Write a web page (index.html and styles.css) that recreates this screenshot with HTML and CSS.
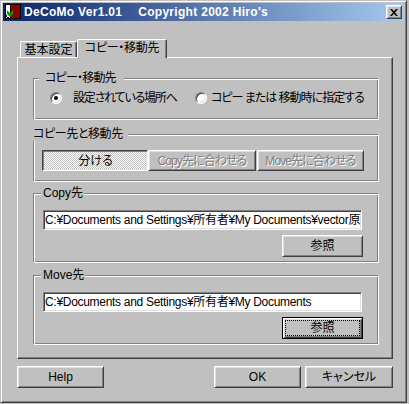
FILE: index.html
```html
<!DOCTYPE html>
<html lang="ja">
<head>
<meta charset="utf-8">
<title>DeCoMo</title>
<link rel="stylesheet" href="styles.css">
</head>
<body>
<div class="window">
  <div class="titlebar">
    <svg class="app-icon" width="16" height="16" viewBox="0 0 16 16">
      <rect x="0.5" y="0.5" width="6" height="14" fill="#fff" stroke="#000"/>
      <rect x="5" y="0" width="11" height="15" fill="#000"/>
      <rect x="6" y="1" width="9" height="13" fill="#8c0000"/>
      <polygon points="2,6 5,9 8,6 8,10 5,13 2,10" fill="#00a000"/>
      <rect x="0" y="11" width="2" height="2" fill="#000"/>
      <rect x="2" y="13" width="2" height="2" fill="#000"/>
      <rect x="0" y="14" width="1" height="2" fill="#000"/>
    </svg>
    <span class="title">DeCoMo Ver1.01　 Copyright 2002 Hiro's</span>
    <span class="close">
      <svg width="8" height="7" viewBox="0 0 8 7">
        <path d="M0 0h2l2 2.2L6 0h2L5 3.5 8 7H6L4 4.8 2 7H0l3-3.5z" fill="#000"/>
      </svg>
    </span>
  </div>

  <div class="tabs">
    <div class="tab">基本設定</div>
    <div class="tab active">コピー・移動先</div>
  </div>

  <div class="panel">
    <div class="group g1">
      <div class="legend l1">コピー・移動先</div>
      <div class="radios">
        <div class="opt opt1"><span class="radio checked"></span><span class="opt-text">設定されている場所へ</span></div>
        <div class="opt"><span class="radio"></span><span class="opt-text near">コピー または 移動時に指定する</span></div>
      </div>
    </div>

    <div class="group g2">
      <div class="legend l2">コピー先と移動先</div>
      <div class="seg">
        <div class="btn seg-btn w1 pressed">分ける</div>
        <div class="btn seg-btn w2 disabled">Copy先に合わせる</div>
        <div class="btn seg-btn w3 disabled">Move先に合わせる</div>
      </div>
    </div>

    <div class="group path-group g3">
      <div class="legend l3">Copy先</div>
      <div class="field">C:¥Documents and Settings¥所有者¥My Documents¥vector原</div>
      <div class="btn browse">参照</div>
    </div>

    <div class="group path-group g4">
      <div class="legend l3">Move先</div>
      <div class="field">C:¥Documents and Settings¥所有者¥My Documents</div>
      <div class="btn browse default"><span class="focus">参照</span></div>
    </div>
  </div>

  <div class="footer">
    <div class="btn foot-btn">Help</div>
    <div class="spacer"></div>
    <div class="btn foot-btn ok">OK</div>
    <div class="btn foot-btn cancel">キャンセル</div>
  </div>
</div>
</body>
</html>
```

FILE: styles.css
```css
* { box-sizing: border-box; }

html, body {
  margin: 0;
  padding: 0;
}

body {
  width: 409px;
  height: 404px;
  overflow: hidden;
  background: #c0c0c0;
  color: #000;
  font-family: "Liberation Sans", "Noto Sans CJK JP", sans-serif;
  font-size: 12px;
  line-height: 14px;
  font-feature-settings: "palt";
}

.window {
  width: 407px;
  height: 403px;
  border: 1px solid;
  border-color: #c0c0c0 #404040 #404040 #c0c0c0;
  box-shadow: inset 1px 1px #fff, inset -1px -1px #808080;
  padding: 2px;
  display: flex;
  flex-direction: column;
}

/* title bar */
.titlebar {
  height: 18px;
  display: flex;
  align-items: center;
  padding: 0 2px;
  background: linear-gradient(to right, #0a246a, #a6caf0);
}

.app-icon {
  flex: none;
  display: block;
}

.title {
  flex: 1;
  margin-left: 3px;
  color: #fff;
  font-weight: bold;
  white-space: pre;
  letter-spacing: 0.3px;
}

.close {
  flex: none;
  width: 16px;
  height: 14px;
  display: flex;
  align-items: center;
  justify-content: center;
  background: #c0c0c0;
  border: 1px solid;
  border-color: #fff #404040 #404040 #fff;
  box-shadow: inset 1px 1px #dfdfdf, inset -1px -1px #808080;
}

.close svg { display: block; }

/* tabs */
.tabs {
  display: flex;
  align-items: flex-end;
  height: 18px;
  margin-top: 18px;
  margin-left: 14px;
  padding-left: 3px;
}

.tab {
  width: 57px;
  height: 16px;
  display: flex;
  align-items: center;
  justify-content: center;
  padding-top: 1px;
  border-top: 1px solid #fff;
  border-left: 1px solid #fff;
  border-right: 1px solid #404040;
  box-shadow: inset -1px 0 #808080;
  border-radius: 2px 2px 0 0;
  white-space: nowrap;
}

.tab.active {
  width: 90px;
  height: 19px;
  margin-bottom: -1px;
  padding-top: 0;
  padding-bottom: 2px;
  position: relative;
  z-index: 1;
  background: #c0c0c0;
  letter-spacing: -0.3px;
}

/* panel */
.panel {
  margin-left: 14px;
  width: 376px;
  height: 302px;
  border: 1px solid;
  border-color: #fff #404040 #404040 #fff;
  box-shadow: inset -1px -1px #808080;
  padding: 20px 13px 0 15px;
  display: flex;
  flex-direction: column;
}

.group {
  display: flex;
  flex-direction: column;
  border: 1px solid;
  border-color: #808080 #fff #fff #808080;
  box-shadow: inset 1px 1px #fff, inset -1px -1px #808080;
}

.legend {
  align-self: flex-start;
  margin-top: -8px;
  background: #c0c0c0;
  line-height: 14px;
  height: 14px;
  white-space: nowrap;
}

.l1 { margin-left: 5px; padding: 0 8px 0 6px; letter-spacing: -0.8px; }
.l2 { margin-left: -1px; padding: 0 5px 0 0; letter-spacing: -0.4px; }
.l3 { margin-left: 7px; padding: 0 1px 0 2px; }

.g1 { height: 42px; }
.g2 { height: 48px; margin-top: 14px; }
.g3 { height: 70px; margin-top: 11px; }
.g4 { height: 70px; margin-top: 12px; }

/* radios */
.radios {
  display: flex;
  margin-top: 6px;
  padding-left: 16px;
  height: 14px;
  align-items: center;
}

.opt {
  display: flex;
  align-items: center;
  white-space: nowrap;
}

.opt1 { width: 145px; }

.opt-text { margin-left: 11px; letter-spacing: -1.2px; }
.opt-text.near { margin-left: 4px; letter-spacing: -1px; }

.radio {
  flex: none;
  width: 12px;
  height: 12px;
  border-radius: 50%;
  border: 1px solid;
  border-color: #808080 #fff #fff #808080;
  box-shadow: inset 1px 1px #404040, inset -1px -1px #dfdfdf;
  background: #fff;
  display: flex;
  align-items: center;
  justify-content: center;
}

.radio.checked::after {
  content: "";
  width: 4px;
  height: 4px;
  border-radius: 50%;
  background: #000;
}

/* buttons */
.btn {
  display: flex;
  align-items: center;
  justify-content: center;
  background: #c0c0c0;
  border: 1px solid;
  border-color: #fff #404040 #404040 #fff;
  box-shadow: inset 1px 1px #dfdfdf, inset -1px -1px #808080;
  white-space: nowrap;
}

.seg {
  display: flex;
  margin-top: 9px;
  padding-left: 8px;
}

.seg-btn { height: 21px; }
.w1 { width: 106px; }
.w2 { width: 108px; }
.w3 { width: 107px; margin-left: 1px; }

.pressed {
  border-color: #404040 #fff #fff #404040;
  box-shadow: inset 1px 1px #808080, inset -1px -1px #dfdfdf;
  background: repeating-conic-gradient(#fff 0 25%, #c0c0c0 0 50%) 0 0 / 2px 2px;
  padding: 1px 0 0 1px;
}

.disabled {
  color: #808080;
  text-shadow: 1px 1px 0 #fff;
  letter-spacing: -0.9px;
}

.field {
  margin-top: 10px;
  margin-left: 9px;
  width: 319px;
  height: 20px;
  border: 1px solid;
  border-color: #808080 #fff #fff #808080;
  box-shadow: inset 1px 1px #404040, inset -1px -1px #dfdfdf;
  background: #fff;
  padding: 1px 0 0 1px;
  line-height: 16px;
  white-space: nowrap;
  overflow: hidden;
  letter-spacing: -0.3px;
}

.browse {
  align-self: flex-end;
  margin-top: 5px;
  margin-right: 15px;
  width: 81px;
  height: 22px;
}

.browse.default {
  border-color: #000;
  box-shadow: inset 1px 1px #fff, inset -1px -1px #404040, inset 2px 2px #dfdfdf, inset -2px -2px #808080;
  padding: 2px;
  align-items: stretch;
}

.focus {
  flex: 1;
  display: flex;
  align-items: center;
  justify-content: center;
  border: 1px dotted #000;
}

/* footer */
.footer {
  display: flex;
  margin-top: 7px;
  margin-left: 14px;
  width: 376px;
}

.foot-btn {
  width: 87px;
  height: 22px;
}

.spacer { flex: 1; }

.ok { margin-right: 4px; }
.cancel { width: 88px; }
```
